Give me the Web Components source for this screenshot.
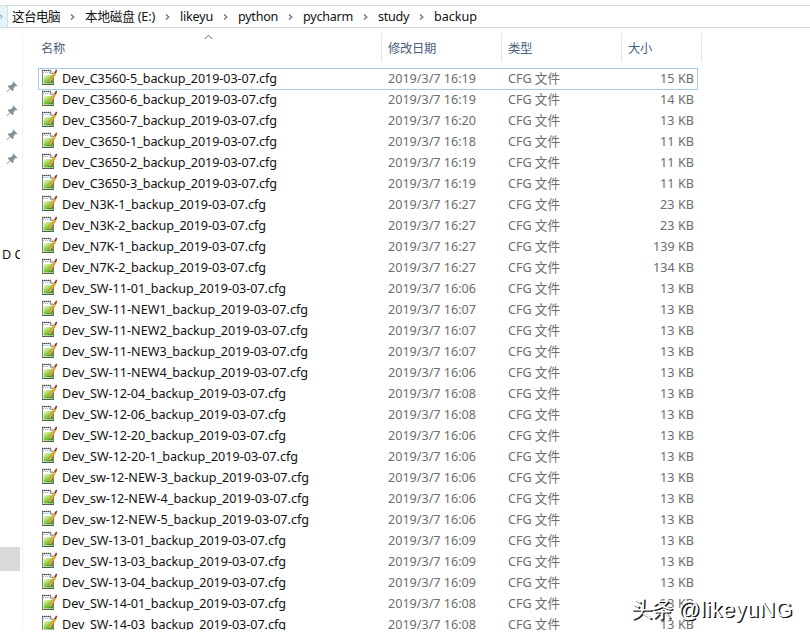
<!DOCTYPE html>
<html lang="zh-CN">
<head>
<meta charset="utf-8">
<title>backup</title>
<style>
html,body{margin:0;height:640px;overflow:hidden;background:#fff}
body{font:12.6px/21px "Noto Sans","Noto Sans CJK SC",sans-serif;color:#111}
</style>
</head>
<body>
<file-explorer></file-explorer>
<script>
const define = (name, html, setup) => customElements.define(name, class extends HTMLElement {
  connectedCallback() {
    if (this.shadowRoot) return;
    const t = document.createElement('template');
    t.innerHTML = html;
    this.attachShadow({mode: 'open'}).append(t.content.cloneNode(true));
    if (setup) setup(this, this.shadowRoot);
  }
});

// Text whose tracking is adjusted so that it fills a given width.
define('fit-text', `<style>:host{display:inline-block;white-space:pre;flex:none}span{display:inline-block}</style><span><slot></slot></span>`, (el, root) => {
  const w = +el.getAttribute('w'), span = root.querySelector('span');
  const n = [...el.textContent].length;
  const ls = (w - span.getBoundingClientRect().width) / n;
  span.style.letterSpacing = ls + 'px';
  el.style.width = w + 'px';
});

define('note-icon', `<style>:host{display:block;width:17px;height:17px;flex:none}svg{display:block}</style>
<svg width="17" height="17" viewBox="0 0 17 17">
<defs><linearGradient id="g" x2=".7" y2="1"><stop offset="0" stop-color="#f2fbd8"/><stop offset=".45" stop-color="#a8d85c"/><stop offset="1" stop-color="#3f9c1c"/></linearGradient></defs>
<path d="M1.5 1.5H9.5L12.5 4.5V15.5H1.5Z" fill="#fff" stroke="#7b877e"/>
<path d="M1 1.5H11" stroke="#55555f" stroke-width="1.4" stroke-dasharray="1 1"/>
<path d="M2 3.5H9" stroke="#a9afb6" stroke-dasharray="1 1"/>
<path d="M9.5 1.5V4.5H12.5" fill="#e8ebef" stroke="#83899a" stroke-width=".8"/>
<rect x="2.5" y="6" width="9.5" height="8.5" fill="url(#g)"/>
<path d="M1 15.5H13" stroke="#4c6549"/>
<path d="M14.5 3L9.4 12" stroke="#a9651c" stroke-width="2.4"/>
<path d="M14.2 3.3L9.4 11.7" stroke="#f6b62c" stroke-width="1.6"/>
<path d="M13.4 3.5L15 .6L16.3 1.3L15 4.2Z" fill="#8d3a24"/>
<path d="M8.5 10.8L8 13.6L10.4 12.1Z" fill="#e8b264"/><path d="M8.1 12.7V13.8L9 13.2Z" fill="#333"/>
</svg>`);

define('pin-icon', `<style>:host{display:block;width:12px;height:12px}svg{display:block}</style>
<svg width="12" height="12" viewBox="0 0 12 12"><path d="M7.3 .6L11.3 4.6L10.3 5.3L9.6 5L7.6 7.2L7.4 9.7L6.5 10.3L4.2 7.9L.9 11.2L.5 10.8L3.7 7.4L1.6 5.2L2.3 4.4L4.8 4.3L7 2.3L6.6 1.4Z" fill="#87919a"/></svg>`);

define('crumb-bar', `<style>
:host{display:flex;box-sizing:border-box;height:23px;border:solid #d9d9d9;border-width:1px 0;align-items:center;overflow:hidden}
.edge{width:7px;height:21px;background:#e5f3fc;border-right:1px solid #c4e2f5;margin-right:4px;display:flex;align-items:center}
.sep{width:25px;display:flex;justify-content:center}
svg{display:block}
</style><div class="edge"><svg width="3" height="7"><path d="M0 1.5L2 3.5L0 5.5" fill="none" stroke="#777"/></svg></div>`, (el, root) => {
  [['这台电脑',48],['本地磁盘 (E:)',70],['likeyu',33],['python',40],['pycharm',50],['study',31],['backup',43]].forEach(([t,w], i) => {
    root.lastChild.insertAdjacentHTML('afterend', (i ? '<div class="sep"><svg width="6" height="8"><path d="M1 1.4L3.8 4L1 6.6" fill="none" stroke="#707070" stroke-width="1.3"/></svg></div>' : '') + `<fit-text w="${w}">${t}</fit-text>`);
  });
});

define('nav-pane', `<style>
:host{display:flex;flex-direction:column;box-sizing:border-box;width:23px;border-right:1px solid #f3f3f3;overflow:hidden}
.pins{display:grid;gap:12px;padding:45px 0 0 6px}
.label{margin-top:79px;padding-left:2px;width:18px;overflow:hidden;white-space:nowrap;height:21px}
.thumb{width:20px;height:24px;background:#d9d9d9;margin-top:282px}
</style><div class="pins"><pin-icon></pin-icon><pin-icon></pin-icon><pin-icon></pin-icon><pin-icon></pin-icon></div><div class="label">D C</div><div class="thumb"></div>`);

define('column-head', `<style>
:host{display:grid;grid-template-columns:344px 120px 120px 80px;height:29px;margin-top:-3px;color:#4c607a;width:664px;font-size:12.3px}
div{border-right:1px solid #e5e5e5;padding:5px 0 0 6px;box-sizing:border-box;position:relative}
.first{padding-left:3px}
svg{position:absolute;left:166px;top:1px}
</style><div class="first"><fit-text w="24">名称</fit-text><svg width="9" height="6"><path d="M.7 5L4.5 1.2L8.3 5" fill="none" stroke="#666"/></svg></div><div><fit-text w="48">修改日期</fit-text></div><div><fit-text w="24">类型</fit-text></div><div><fit-text w="24">大小</fit-text></div>`);

define('file-row', `<style>
:host{display:grid;grid-template-columns:350px 120px 186px;height:21px;width:660px;box-sizing:border-box;color:#6d6d6d}
:host([selected]){outline:1px solid #a3cbe8;outline-offset:-1px;height:22px;margin-bottom:-1px}
.name{display:flex;gap:4px;padding:1px 0 0 3px;color:#111}
.cell{padding-top:1px;display:flex;justify-content:space-between}
fit-text{height:20px;line-height:20px}
</style><div class="name"><note-icon></note-icon></div><div class="cell date"></div><div class="cell size"></div>`, (el, root) => {
  const {name, time, size, w} = el.dataset;
  root.querySelector('.name').insertAdjacentHTML('beforeend', `<fit-text w="${w}">${name}</fit-text>`);
  root.querySelector('.date').innerHTML = `<fit-text w="88">2019/3/7 ${time}</fit-text>`;
  root.querySelector('.size').innerHTML = `<fit-text w="52">CFG 文件</fit-text><fit-text w="${size > 99 ? 41 : 34}">${size} KB</fit-text>`;
});

define('file-list', `<style>:host{display:block;overflow:hidden;height:562px;margin-top:6px}</style>`, (el, root) => {
  const rows = `C3560-5,16:19,15,215
C3560-6,16:19,14,215
C3560-7,16:20,13,215
C3650-1,16:18,11,215
C3650-2,16:19,11,215
C3650-3,16:19,11,215
N3K-1,16:27,23,204
N3K-2,16:27,23,204
N7K-1,16:27,139,204
N7K-2,16:27,134,204
SW-11-01,16:06,13,224
SW-11-NEW1,16:07,13,246
SW-11-NEW2,16:07,13,246
SW-11-NEW3,16:07,13,246
SW-11-NEW4,16:06,13,246
SW-12-04,16:08,13,224
SW-12-06,16:08,13,224
SW-12-20,16:06,13,224
SW-12-20-1,16:06,13,236
sw-12-NEW-3,16:06,13,247
sw-12-NEW-4,16:06,13,247
sw-12-NEW-5,16:06,13,247
SW-13-01,16:09,13,224
SW-13-03,16:09,13,224
SW-13-04,16:09,13,224
SW-14-01,16:08,13,224
SW-14-03,16:08,13,224`.split('\n').map(r => r.split(','));
  root.querySelector('style').insertAdjacentHTML('afterend', rows.map(([n,t,s,w], i) =>
    `<file-row ${i ? '' : 'selected'} data-name="Dev_${n}_backup_2019-03-07.cfg" data-time="${t}" data-size="${s}" data-w="${w}"></file-row>`).join(''));
});

define('water-mark', `<style>:host{position:absolute;left:631px;top:596px;font:21.5px/28px "Liberation Sans","Noto Sans CJK SC",sans-serif;color:#fff;text-shadow:1px 1px 0 #1a1a1a,1.4px 1px 0 #1a1a1a;display:flex;gap:6px}</style><fit-text w="41">头条</fit-text><fit-text w="115">@likeyuNG</fit-text>`);

define('file-explorer', `<style>
:host{display:flex;flex-direction:column;height:640px;padding-top:5px;box-sizing:border-box;position:relative}
.body{display:flex;height:602px}
nav-pane{margin-top:8px;height:594px}
.main{padding:8px 0 0 15px}
</style><crumb-bar></crumb-bar><div class="body"><nav-pane></nav-pane><div class="main"><column-head></column-head><file-list></file-list></div></div><water-mark></water-mark>`);
</script>
</body>
</html>
